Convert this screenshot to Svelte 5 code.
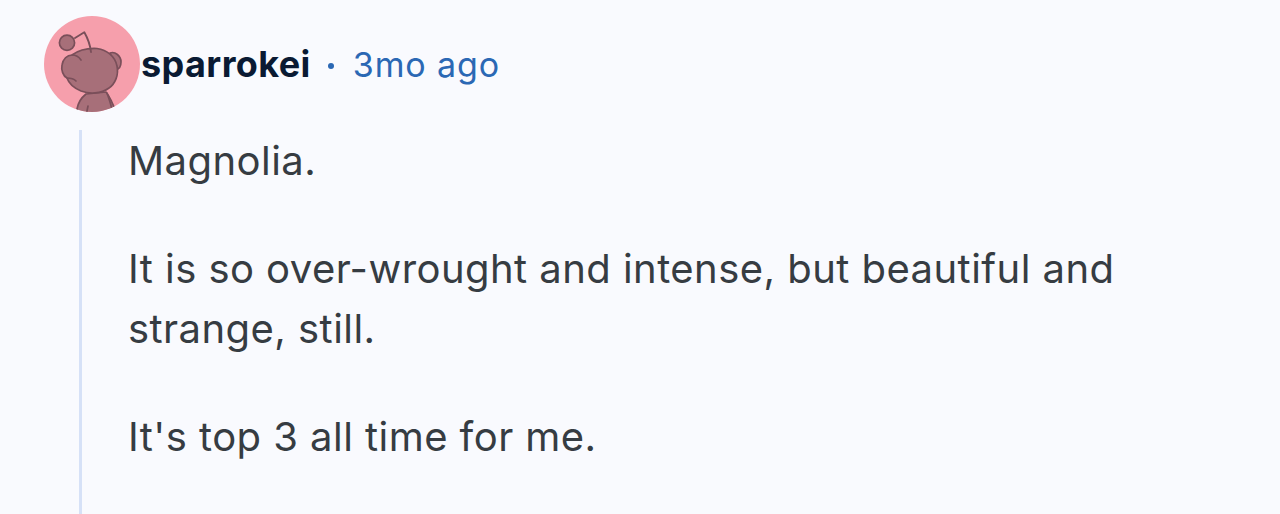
<script>
	let paragraphs = [
		"Magnolia.",
		"It is so over-wrought and intense, but beautiful and strange, still.",
		"It's top 3 all time for me."
	];
</script>

<div class="comment">
	<header class="meta">
		<svg class="avatar" viewBox="0 0 96 96" aria-hidden="true">
			<defs>
				<clipPath id="round"><circle cx="48" cy="48" r="48" /></clipPath>
			</defs>
			<circle cx="48" cy="48" r="48" fill="#f69fac" />
			<g clip-path="url(#round)" fill="#a76f79" stroke="#7a4f5a" stroke-width="1.7" stroke-linejoin="round" stroke-linecap="round">
				<path d="M32 100 L33 93 C34 87 37 82 42 78 L62 76 C66 81 69 88 72 96 L72 100 Z" />
				<path d="M42 100 L44 90 M63 77 C65 83 67 88 68 94" fill="none" />
				<path d="M66 37 C71 35 77 40 77 46 C77 50 75 53 72 54 Z" />
				<path d="M28 39 C35 34 44 32 53 32.5 C63 34 71 40 73 50 C75 59 71 68 65 72 C57 78 45 78 37 75 C30 72 25 68 23 62 C19 60 17 54 18 49 C19 43 23 39 28 39 Z" />
				<path d="M28 39 C31 39 35 41 37 44 M23 62 C26 62 30 63 32 65" fill="none" />
				<circle cx="23" cy="26.7" r="7.6" />
				<path d="M31 22 L40.3 16.3 C43 21 46 28 47 36" fill="none" stroke-width="1.9" />
			</g>
		</svg>
		<span class="author">sparrokei</span>
		<span class="dot"></span>
		<span class="time">3mo ago</span>
	</header>
	<div class="body">
		{#each paragraphs as text}
			<p>{text}</p>
		{/each}
	</div>
</div>

<style>
	:global(body) {
		margin: 0;
		background: #f9fafe;
		overflow: hidden;
	}

	.comment {
		height: 514px;
		box-sizing: border-box;
		padding: 16px 0 0 44px;
		font-family: Inter, "Liberation Sans", sans-serif;
	}

	.meta {
		display: flex;
		align-items: center;
		height: 96px;
	}

	.avatar {
		width: 96px;
		height: 96px;
		flex: none;
	}

	.author {
		margin-left: 1px;
		font-size: 36px;
		font-weight: 700;
		letter-spacing: 0.4px;
		color: #0a1a33;
	}

	.dot {
		width: 6px;
		height: 6px;
		margin: 4px 19px 0 17px;
		border-radius: 50%;
		background: #2b68b4;
	}

	.time {
		font-size: 34px;
		letter-spacing: 0.9px;
		color: #2b68b4;
	}

	.body {
		margin: 18px 0 0 35px;
		padding: 1px 0 0 46px;
		border-left: 3px solid #d6e1f7;
		height: 384px;
		color: #363c42;
		font-size: 40px;
		letter-spacing: 0.45px;
		line-height: 60px;
		width: 1040px;
		box-sizing: border-box;
	}

	p {
		margin: 0 0 48px;
	}
</style>
